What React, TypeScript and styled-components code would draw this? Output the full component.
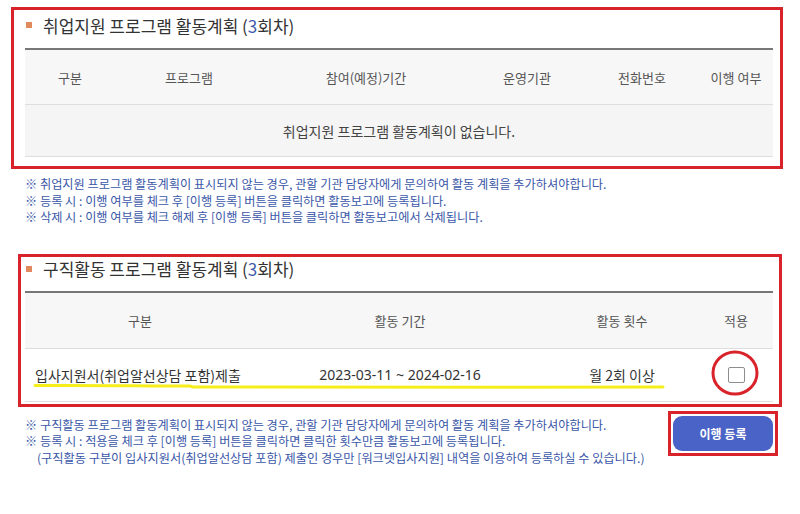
import React from "react";
import styled, { createGlobalStyle } from "styled-components";

const Global = createGlobalStyle`
  html, body { margin: 0; padding: 0; background: #ffffff; }
  body { font-family: "Noto Sans CJK KR", "Noto Sans", sans-serif; color: #333; }
`;

const Page = styled.div`
  width: 800px;
  height: 514px;
  display: flex;
  flex-direction: column;
  overflow: hidden;
`;

const Highlight = styled.section<{ $left: number; $right: number; $top: number; $padL: number; $padR: number; $padB: number }>`
  margin: ${(p) => p.$top}px ${(p) => p.$right}px 0 ${(p) => p.$left}px;
  border: 3px solid #d9232b;
  padding: 0 ${(p) => p.$padR}px ${(p) => p.$padB}px ${(p) => p.$padL}px;
  display: flex;
  flex-direction: column;
`;

const TitleRow = styled.div<{ $h: number; $pb: number }>`
  height: ${(p) => p.$h}px;
  padding-bottom: ${(p) => p.$pb}px;
  box-sizing: border-box;
  display: flex;
  align-items: center;
  gap: 11px;
  padding-left: 1px;
`;

const Bullet = styled.span`
  width: 6px;
  height: 6px;
  background: #e08a5e;
  flex: none;
`;

const TitleText = styled.h2`
  margin: 0;
  font-size: 17px;
  font-weight: 400;
  color: #333;
  letter-spacing: 0;
`;

const Num = styled.span`
  color: #3f5bab;
`;

const Table = styled.div`
  border-top: 2px solid #777;
  display: flex;
  flex-direction: column;
`;

const Row = styled.div<{ $cols: string; $h: number; $bg: string }>`
  position: relative;
  display: grid;
  grid-template-columns: ${(p) => p.$cols};
  height: ${(p) => p.$h}px;
  background: ${(p) => p.$bg};
  border-bottom: 1px solid #dedede;
  align-items: center;
`;

const HeadCell = styled.div`
  text-align: center;
  font-size: 13px;
  color: #555;
`;

const Cell = styled.div<{ $align?: string; $pl?: number }>`
  text-align: ${(p) => p.$align || "center"};
  padding-left: ${(p) => p.$pl || 0}px;
  font-size: 14px;
  color: #333;
  display: flex;
  justify-content: ${(p) => (p.$align === "left" ? "flex-start" : "center")};
`;

const DateText = styled.span`
  font-family: "Noto Sans", "Noto Sans CJK KR", sans-serif;
  font-size: 14px;
  color: #333;
`;

const Empty = styled.div`
  grid-column: 1 / -1;
  text-align: center;
  font-size: 14px;
  color: #444;
`;

const Check = styled.span`
  width: 15px;
  height: 14px;
  border: 1px solid #8d8d8d;
  border-radius: 2px;
  background: #fff;
`;

const Notes = styled.div<{ $top: number }>`
  margin-top: ${(p) => p.$top}px;
  padding-left: 25px;
  font-size: 12.2px;
  line-height: 16.5px;
  color: #3a57a8;
`;

const NoteLine = styled.div<{ $indent?: boolean }>`
  white-space: nowrap;
  padding-left: ${(p) => (p.$indent ? 12 : 0)}px;
`;

const BottomRow = styled.div`
  display: flex;
  justify-content: space-between;
  align-items: flex-start;
  margin-top: 4px;
  padding-right: 22px;
`;

const ButtonFrame = styled.div`
  border: 3px solid #d9232b;
  padding: 2px;
  display: flex;
`;

const Button = styled.button`
  width: 100px;
  height: 35px;
  border: none;
  border-radius: 9px;
  background: #4a63c6;
  color: #fff;
  font-family: "Noto Sans CJK KR", sans-serif;
  font-size: 12px;
  font-weight: 700;
  cursor: pointer;
`;

const Overlay = styled.svg`
  position: absolute;
  left: 0;
  top: 0;
  pointer-events: none;
  overflow: visible;
`;

const cols1 = "90px 148px 206px 116px 114px 1fr";
const cols2 = "230px 290px 154px 1fr";

export default function App() {
  return (
    <Page>
      <Global />
      <Highlight $left={11} $right={17} $top={7} $padL={11} $padR={7} $padB={9}>
        <TitleRow $h={38} $pb={8}>
          <Bullet />
          <TitleText>
            취업지원 프로그램 활동계획 (<Num>3</Num>회차)
          </TitleText>
        </TitleRow>
        <Table>
          <Row $cols={cols1} $h={54} $bg="#f7f7f7">
            <HeadCell>구분</HeadCell>
            <HeadCell>프로그램</HeadCell>
            <HeadCell>참여(예정)기간</HeadCell>
            <HeadCell>운영기관</HeadCell>
            <HeadCell>전화번호</HeadCell>
            <HeadCell>이행 여부</HeadCell>
          </Row>
          <Row $cols={cols1} $h={51} $bg="#f5f5f5">
            <Empty>취업지원 프로그램 활동계획이 없습니다.</Empty>
          </Row>
        </Table>
      </Highlight>

      <Notes $top={7}>
        <NoteLine>※ 취업지원 프로그램 활동계획이 표시되지 않는 경우, 관할 기관 담당자에게 문의하여 활동 계획을 추가하셔야합니다.</NoteLine>
        <NoteLine>※ 등록 시 : 이행 여부를 체크 후 [이행 등록] 버튼을 클릭하면 활동보고에 등록됩니다.</NoteLine>
        <NoteLine>※ 삭제 시 : 이행 여부를 체크 해제 후 [이행 등록] 버튼을 클릭하면 활동보고에서 삭제됩니다.</NoteLine>
      </Notes>

      <Highlight $left={18} $right={18} $top={28} $padL={4} $padR={6} $padB={2}>
        <TitleRow $h={34} $pb={10}>
          <Bullet />
          <TitleText>
            구직활동 프로그램 활동계획 (<Num>3</Num>회차)
          </TitleText>
        </TitleRow>
        <Table>
          <Row $cols={cols2} $h={55} $bg="#f7f7f7">
            <HeadCell>구분</HeadCell>
            <HeadCell>활동 기간</HeadCell>
            <HeadCell>활동 횟수</HeadCell>
            <HeadCell>적용</HeadCell>
          </Row>
          <Row $cols={cols2} $h={52} $bg="#ffffff">
            <Cell $align="left" $pl={10}>입사지원서(취업알선상담 포함)제출</Cell>
            <Cell>
              <DateText>2023-03-11 ~ 2024-02-16</DateText>
            </Cell>
            <Cell>월 2회 이상</Cell>
            <Cell>
              <Check />
            </Cell>
            <Overlay width="748" height="52">
              <path
                d="M10 36.5 C 60 36, 120 37, 165 37 L 168 38 C 300 38.5, 480 38.5, 638 38"
                fill="none"
                stroke="#f5ee1a"
                strokeWidth="3"
                strokeLinecap="round"
              />
              <ellipse cx="710" cy="24" rx="22" ry="21" fill="none" stroke="#d9232b" strokeWidth="3" />
            </Overlay>
          </Row>
        </Table>
      </Highlight>

      <BottomRow>
        <Notes $top={6}>
          <NoteLine>※ 구직활동 프로그램 활동계획이 표시되지 않는 경우, 관할 기관 담당자에게 문의하여 활동 계획을 추가하셔야합니다.</NoteLine>
          <NoteLine>※ 등록 시 : 적용을 체크 후 [이행 등록] 버튼을 클릭하면 클릭한 횟수만큼 활동보고에 등록됩니다.</NoteLine>
          <NoteLine $indent>(구직활동 구분이 입사지원서(취업알선상담 포함) 제출인 경우만 [워크넷입사지원] 내역을 이용하여 등록하실 수 있습니다.)</NoteLine>
        </Notes>
        <ButtonFrame>
          <Button>이행 등록</Button>
        </ButtonFrame>
      </BottomRow>
    </Page>
  );
}
